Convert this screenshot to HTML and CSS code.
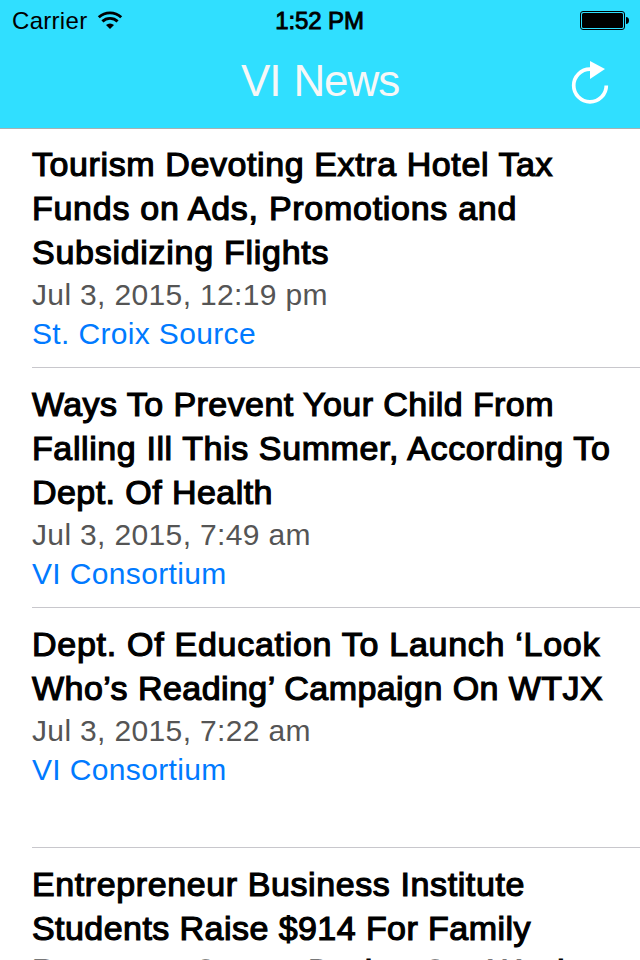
FILE: index.html
```html
<!DOCTYPE html>
<html lang="en">
<head>
    <meta charset="UTF-8">
    <title>VI News</title>
    <link rel="stylesheet" href="styles.css">
</head>
<body>
    <header class="header">
        <div class="status-bar">
            <div class="carrier">
                <span>Carrier</span>
                <svg width="26" height="19" viewBox="0 0 26 19" fill="none" stroke="#000" stroke-width="2.9">
                    <path d="M1.8 6.3A16.5 16.5 0 0 1 24.2 6.3"/>
                    <path d="M5.4 10.4A11 11 0 0 1 20.6 10.4"/>
                    <path d="M9 14A6 6 0 0 1 17 14L13 18Z" fill="#000" stroke="none"/>
                </svg>
            </div>
            <div class="time">1:52 PM</div>
            <div class="battery">
                <svg width="49" height="20" viewBox="0 0 49 20">
                    <rect x=".5" y=".5" width="44" height="18" rx="2.5" fill="none" stroke="#000"/>
                    <rect x="2" y="2" width="41" height="15" rx="1.5"/>
                    <path d="M46 6c2 0 3 1.5 3 3.5s-1 3.5-3 3.5z"/>
                </svg>
            </div>
        </div>
        <div class="nav-bar">
            <h1 class="nav-title">VI News</h1>
            <button class="refresh" aria-label="Refresh">
                <svg width="38" height="46" viewBox="0 0 38 46">
                    <path d="M35.3 25.5A16.3 16.3 0 1 1 19 9.2" fill="none" stroke="#fff" stroke-width="3.7"/>
                    <path d="M19 1l15 8-15 10z" fill="#fff"/>
                </svg>
            </button>
        </div>
    </header>

    <!-- Article list -->
    <main class="news-list">
        <article class="news-item">
            <h2 class="headline">
                <span class="line">Tourism Devoting Extra Hotel Tax</span>
                <span class="line wide">Funds on Ads, Promotions and</span>
                <span class="line wide">Subsidizing Flights</span>
            </h2>
            <p class="date">Jul 3, 2015, 12:19 pm</p>
            <p class="source">St. Croix Source</p>
        </article>
        <article class="news-item">
            <h2 class="headline">
                <span class="line tight">Ways To Prevent Your Child From</span>
                <span class="line">Falling Ill This Summer, According To</span>
                <span class="line tight">Dept. Of Health</span>
            </h2>
            <p class="date">Jul 3, 2015, 7:49 am</p>
            <p class="source">VI Consortium</p>
        </article>
        <article class="news-item">
            <h2 class="headline">
                <span class="line wide">Dept. Of Education To Launch ‘Look</span>
                <span class="line tight">Who’s Reading’ Campaign On WTJX</span>
            </h2>
            <p class="date">Jul 3, 2015, 7:22 am</p>
            <p class="source">VI Consortium</p>
        </article>
        <article class="news-item">
            <h2 class="headline">
                <span class="line">Entrepreneur Business Institute</span>
                <span class="line tight">Students Raise $914 For Family</span>
                <span class="line last">Resource Center During Car Wash</span>
            </h2>
        </article>
    </main>
</body>
</html>
```
FILE: styles.css
```css
* { box-sizing: border-box; }
body { margin: 0; height: 960px; overflow: hidden; background: #fff; color: #000; font-family: "Liberation Sans", Arial, sans-serif; }
h1, h2, p { margin: 0; font-weight: normal; }
svg { display: block; }

.header { height: 129px; background: #30dfff; border-bottom: 1px solid #a8b1b3; }
.status-bar { display: grid; grid-template-columns: 1fr auto 1fr; height: 40px; padding: 0 11px 0 12px; font-size: 24px; line-height: 42px; }
.carrier { display: flex; gap: 10px; letter-spacing: .3px; }
.carrier svg { margin-top: 11px; }
.time { margin-right: 2px; letter-spacing: -.1px; -webkit-text-stroke: .9px #000; }
.battery { display: flex; justify-content: flex-end; padding-top: 11px; }

.nav-bar { display: grid; grid-template-columns: 1fr auto 1fr; height: 88px; }
.nav-title { grid-column: 2; color: #f7f7f7; font-size: 44px; line-height: 82px; letter-spacing: -1.1px; word-spacing: 2px; }
.refresh { justify-self: end; margin: 20px 31px 0 0; padding: 0; width: 38px; height: 46px; border: none; background: none; }

.news-list { height: 831px; padding-left: 32px; overflow: hidden; }
.news-item { height: 240px; padding-top: 14px; border-bottom: 1px solid #c8c7cc; }
.news-item:first-child { height: 239px; padding-top: 13px; }
.headline { margin-bottom: 1px; font-size: 34px; line-height: 44px; letter-spacing: .6px; -webkit-text-stroke: 1.2px #000; }
.line { display: block; white-space: nowrap; }
.line.wide { letter-spacing: .72px; }
.line.tight { letter-spacing: .44px; }
.line.last { line-height: 42px; }
.date, .source { font-size: 30px; line-height: 39px; letter-spacing: .35px; }
.date { color: #555; }
.source { color: #007aff; }
```
